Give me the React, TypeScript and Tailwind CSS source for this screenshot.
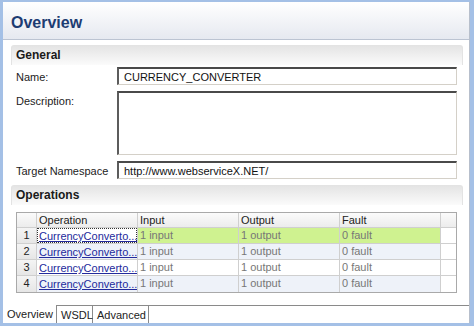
import React from "react";

const inputBox =
  "bg-white border-t-2 border-l-2 border-r border-b border-t-[#4a4a4a] border-l-[#5c5c5c] border-r-[#d4d0c8] border-b-[#d4d0c8]";

function SectionHeader({ title }: { title: string }) {
  return (
    <div className="h-[20px] rounded-t-[3px] border border-b-0 border-[#e3e3e3] bg-gradient-to-b from-[#e4e4e4] to-[#fbfbfb] pl-[4px] text-[12px] font-bold leading-[19px] text-[#1a1a1a]">
      {title}
    </div>
  );
}

function FieldRow({ label, children }: { label: string; children: React.ReactNode }) {
  return (
    <div className="flex items-start">
      <div className="h-[18px] w-[101px] leading-[20px] text-[#222]">{label}</div>
      {children}
    </div>
  );
}

const operations = [1, 2, 3, 4].map((n) => ({
  n,
  name: "CurrencyConverto...",
  input: "1 input",
  output: "1 output",
  fault: "0 fault",
}));

export default function App() {
  return (
    <div className="flex h-[326px] w-[474px] flex-col bg-[#a4c0e6] pl-[3px] pr-[4px] pt-[2px] pb-[3px] font-['Liberation_Sans',Arial,sans-serif] text-[11px]">
      <div className="flex flex-1 flex-col border-r border-[#b7bfcc] bg-white">
        {/* page title */}
        <div className="h-[38px] border-b border-[#bcc4d2] bg-gradient-to-b from-white to-[#e6e9f0] pl-[8px] pt-[11px]">
          <div className="text-[16px] font-bold leading-[20px] text-[#1d3c72]">Overview</div>
        </div>

        <div className="flex-1 pl-[8px] pr-[6px] pt-[5px]">
          {/* General */}
          <SectionHeader title="General" />
          <div className="flex flex-col gap-[6px] pl-[5px] pr-[6px] pt-[2px]">
            <FieldRow label="Name:">
              <div className={`h-[18px] flex-1 pl-[5px] pt-[1px] leading-[14px] text-[#111] ${inputBox}`}>
                CURRENCY_CONVERTER
              </div>
            </FieldRow>
            <FieldRow label="Description:">
              <div className={`h-[64px] flex-1 ${inputBox}`} />
            </FieldRow>
            <FieldRow label="Target Namespace">
              <div className={`h-[18px] flex-1 pl-[5px] pt-[1px] leading-[14px] text-[#111] ${inputBox}`}>
                http://www.webserviceX.NET/
              </div>
            </FieldRow>
          </div>

          {/* Operations */}
          <div className="mt-[6px]">
            <SectionHeader title="Operations" />
          </div>
          <div className="pl-[5px] pr-[6px] pt-[7px]">
            <div className="border border-[#a9a9a9]">
              <div className="grid h-[15px] grid-cols-[20px_101px_101px_101px_101px_1fr] bg-gradient-to-b from-[#fbfbfb] to-[#ebebeb] leading-[14px] text-[#222]">
                <div className="border-r border-b border-[#cfcfcf]" />
                <div className="border-r border-b border-[#cfcfcf] pl-[2px]">Operation</div>
                <div className="border-r border-b border-[#cfcfcf] pl-[2px]">Input</div>
                <div className="border-r border-b border-[#cfcfcf] pl-[2px]">Output</div>
                <div className="border-r border-b border-[#cfcfcf] pl-[2px]">Fault</div>
                <div className="border-b border-[#cfcfcf]" />
              </div>
              {operations.map((op, i) => {
                const bg = i === 0 ? "bg-[#cff290]" : i % 2 === 1 ? "bg-[#eef2f9]" : "bg-white";
                const last = i === operations.length - 1;
                const line = last ? "border-r border-[#cfcfcf]" : "border-r border-b border-[#cfcfcf]";
                return (
                  <div
                    key={op.n}
                    className="grid h-[16px] grid-cols-[20px_101px_101px_101px_101px_1fr] leading-[14px]"
                  >
                    <div className={`${line} bg-gradient-to-b from-[#f4f4f4] to-[#e6e6e6] text-center text-[#222]`}>
                      {op.n}
                    </div>
                    <div className={`${line} ${i === 0 ? "bg-white" : bg} overflow-hidden whitespace-nowrap`}>
                      <div
                        className={`h-full pl-[1px] ${i === 0 ? "border border-dotted border-[#333]" : "border border-transparent"}`}
                      >
                        <span className="text-[#232a9c] underline">{op.name}</span>
                      </div>
                    </div>
                    <div className={`${line} ${bg} pl-[2px] text-[#777]`}>{op.input}</div>
                    <div className={`${line} ${bg} pl-[2px] text-[#777]`}>{op.output}</div>
                    <div className={`${line} ${bg} pl-[2px] text-[#777]`}>{op.fault}</div>
                    <div className={`${last ? "" : "border-b border-[#cfcfcf]"} bg-white`} />
                  </div>
                );
              })}
            </div>
          </div>
        </div>

        {/* bottom tabs */}
        <div className="flex h-[18px] leading-[16px] text-[#222]">
          <div className="w-[54px] border-r border-[#8a8a8a] bg-white pl-[4px] pt-[1px]">Overview</div>
          <div className="w-[36px] border-t border-r border-[#8a8a8a] bg-white pl-[4px] pt-[1px]">WSDL</div>
          <div className="w-[56px] border-t border-r border-[#8a8a8a] bg-white pl-[4px] pt-[1px]">Advanced</div>
          <div className="flex-1 border-t border-[#8a8a8a]" />
        </div>
      </div>
    </div>
  );
}
